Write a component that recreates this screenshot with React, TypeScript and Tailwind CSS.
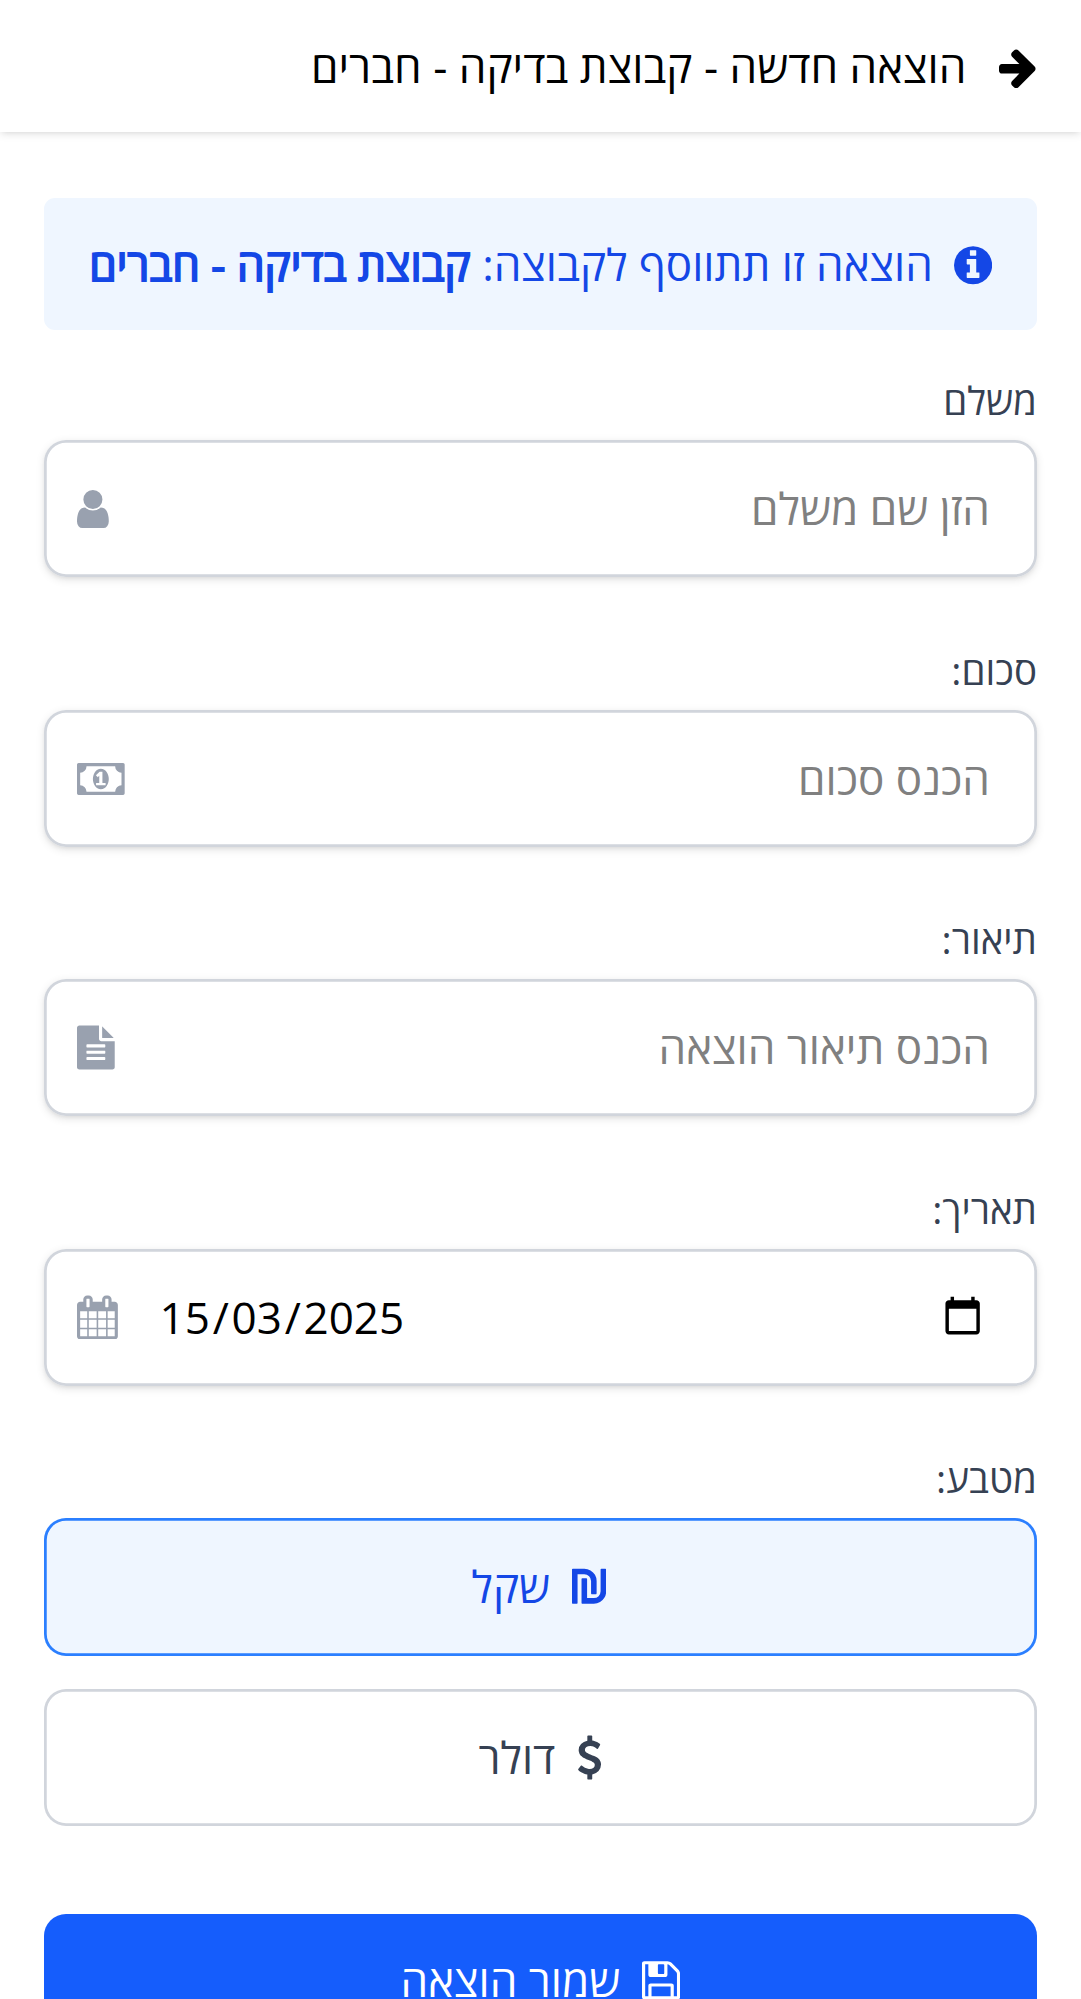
import type { ReactNode } from "react";

const ARROW =
  "M1600 960q0 54-37 91l-651 651q-39 37-91 37-51 0-90-37l-75-75q-38-38-38-91t38-91l293-293h-704q-52 0-84.5-37.5t-32.5-90.5v-128q0-53 32.5-90.5t84.5-37.5h704l-293-294q-38-36-38-90t38-90l75-75q38-38 90-38 53 0 91 38l651 651q37 35 37 90z";
const INFO =
  "M1152 1376v-160q0-14-9-23t-23-9h-96v-512q0-14-9-23t-23-9h-320q-14 0-23 9t-9 23v160q0 14 9 23t23 9h96v320h-96q-14 0-23 9t-9 23v160q0 14 9 23t23 9h448q14 0 23-9t9-23zm-128-896v-160q0-14-9-23t-23-9h-192q-14 0-23 9t-9 23v160q0 14 9 23t23 9h192q14 0 23-9t9-23zm640 416q0 209-103 385.5t-279.5 279.5-385.5 103-385.5-103-279.5-279.5-103-385.5 103-385.5 279.5-279.5 385.5-103 385.5 103 279.5 279.5 103 385.5z";
const USER =
  "M1536 1399q0 109-62.5 187t-150.5 78h-854q-88 0-150.5-78t-62.5-187q0-85 8.5-160.5t31.5-152 58.5-131 94-89 134.5-34.5q131 128 313 128t313-128q76 0 134.5 34.5t94 89 58.5 131 31.5 152 8.5 160.5zm-256-887q0 159-112.5 271.5t-271.5 112.5-271.5-112.5-112.5-271.5 112.5-271.5 271.5-112.5 271.5 112.5 112.5 271.5z";
const MONEY =
  "M768 1152h384v-96h-128v-448h-114l-148 137 77 80q42-37 55-57h2v288h-128v96zm512-256q0 70-21 142t-59.5 134-101.5 101-138 39-138-39-101.5-101-59.5-134-21-142 21-142 59.5-134 101.5-101 138-39 138 39 101.5 101 59.5 134 21 142zm512 256v-512q-106 0-181-75t-75-181h-1152q0 106-75 181t-181 75v512q106 0 181 75t75 181h1152q0-106 75-181t181-75zm128-832v1152q0 26-19 45t-45 19h-1792q-26 0-45-19t-19-45v-1152q0-26 19-45t45-19h1792q26 0 45 19t19 45z";
const FILE_TEXT =
  "M1596 476q14 14 28 36h-472v-472q22 14 36 28zm-476 164h544v1056q0 40-28 68t-68 28h-1344q-40 0-68-28t-28-68v-1600q0-40 28-68t68-28h800v544q0 40 28 68t68 28zm160 736v-64q0-14-9-23t-23-9h-704q-14 0-23 9t-9 23v64q0 14 9 23t23 9h704q14 0 23-9t9-23zm0-256v-64q0-14-9-23t-23-9h-704q-14 0-23 9t-9 23v64q0 14 9 23t23 9h704q14 0 23-9t9-23zm0-256v-64q0-14-9-23t-23-9h-704q-14 0-23 9t-9 23v64q0 14 9 23t23 9h704q14 0 23-9t9-23z";
const CALENDAR =
  "M192 1664h288v-288h-288v288zm352 0h320v-288h-320v288zm-352-352h288v-320h-288v320zm352 0h320v-320h-320v320zm-352-384h288v-288h-288v288zm736 736h320v-288h-320v288zm-384-736h320v-288h-320v288zm768 736h288v-288h-288v288zm-384-352h320v-320h-320v320zm-352-864v-288q0-13-9.5-22.5t-22.5-9.5h-64q-13 0-22.5 9.5t-9.5 22.5v288q0 13 9.5 22.5t22.5 9.5h64q13 0 22.5-9.5t9.5-22.5zm736 864h288v-320h-288v320zm-384-384h320v-288h-320v288zm384 0h288v-288h-288v288zm32-480v-288q0-13-9.5-22.5t-22.5-9.5h-64q-13 0-22.5 9.5t-9.5 22.5v288q0 13 9.5 22.5t22.5 9.5h64q13 0 22.5-9.5t9.5-22.5zm384-64v1280q0 52-38 90t-90 38h-1408q-52 0-90-38t-38-90v-1280q0-52 38-90t90-38h128v-96q0-66 47-113t113-47h64q66 0 113 47t47 113v96h384v-96q0-66 47-113t113-47h64q66 0 113 47t47 113v96h128q52 0 90 38t38 90z";
const SHEKEL =
  "M992 496v496q0 14-9 23t-23 9h-160q-14 0-23-9t-9-23v-496q0-112-80-192t-192-80h-272v1152q0 14-9 23t-23 9h-160q-14 0-23-9t-9-23v-1344q0-14 9-23t23-9h464q135 0 249 66.5t180.5 180.5 66.5 249zm384-464v880q0 135-66.5 249t-180.5 180.5-249 66.5h-464q-14 0-23-9t-9-23v-960q0-14 9-23t23-9h160q14 0 23 9t9 23v768h272q112 0 192-80t80-192v-880q0-14 9-23t23-9h160q14 0 23 9t9 23z";
const DOLLAR =
  "M1362 1185q0 153-99.5 263.5t-258.5 136.5v175q0 14-9 23t-23 9h-135q-13 0-22.5-9.5t-9.5-22.5v-175q-66-9-127.5-31t-101.5-44.5-74-48-46.5-37.5-17.5-18q-17-21-2-41l103-135q7-10 23-12 15-2 24 9l2 2q113 99 243 125 37 8 74 8 81 0 142.5-43t61.5-122q0-28-15-53t-33.5-42-58.5-37.5-66-32-80-32.5q-39-16-61.5-25t-61.5-26.5-62.5-31-56.5-35.5-53.5-42.5-43.5-49-35.5-58-21-66.5-8.5-78q0-138 98-242t255-134v-180q0-13 9.5-22.5t22.5-9.5h135q14 0 23 9t9 23v176q57 6 110.5 23t87 33.5 63.5 37.5 39 29 15 14q17 18 5 38l-81 146q-8 15-23 16-14 3-27-7-3-3-14.5-12t-39-26.5-58.5-32-74.5-26-85.5-11.5q-95 0-155 43t-60 111q0 26 8.5 48t29.5 41.5 39.5 33 56 31 60.5 27 70 27.5q53 20 81 31.5t76 35 75.5 42.5 62 50 53 63.5 31.5 76.5 13 94z";
const SAVE =
  "M512 1536h768v-384h-768v384zm896 0h128v-896q0-14-10-38.5t-20-34.5l-281-281q-10-10-34-20t-39-10v416q0 40-28 68t-68 28h-576q-40 0-68-28t-28-68v-416h-128v1280h128v-416q0-40 28-68t68-28h832q40 0 68 28t28 68v416zm-384-928v-320q0-13-9.5-22.5t-22.5-9.5h-192q-13 0-22.5 9.5t-9.5 22.5v320q0 13 9.5 22.5t22.5 9.5h192q13 0 22.5-9.5t9.5-22.5zm640 32v928q0 40-28 68t-68 28h-1344q-40 0-68-28t-28-68v-1344q0-40 28-68t68-28h928q40 0 88 20t76 48l280 280q28 28 48 76t20 88z";

function Icon({ d, box }: { d: string; box: string }) {
  return (
    <svg viewBox={box} className="h-[44.5px] w-auto shrink-0" fill="currentColor" aria-hidden="true">
      <path d={d} />
    </svg>
  );
}

function Label({ children }: { children: ReactNode }) {
  return <div className="mb-[12px] h-[54px] text-[38.5px] leading-[53px] text-gray-700">{children}</div>;
}

function Field({ label, icon, children }: { label: string; icon: ReactNode; children: ReactNode }) {
  return (
    <div>
      <Label>{label}</Label>
      <div className="flex h-[137px] items-center justify-between rounded-[22px] pr-[47px] pl-[33px] shadow-[inset_0_0_0_2.75px_#d1d5dc,0_2.75px_8.25px_rgb(0_0_0/0.1),0_2.75px_5.5px_-2.75px_rgb(0_0_0/0.1)]">
        {children}
        <span className="text-gray-400">{icon}</span>
      </div>
    </div>
  );
}

function Placeholder({ children }: { children: ReactNode }) {
  return <span className="mb-[1px] leading-[66px] text-[#808080]">{children}</span>;
}

export default function App() {
  return (
    <div
      dir="rtl"
      className="h-[1999px] w-full overflow-hidden bg-white font-['Open_Sans','Noto_Sans',sans-serif] text-[44px] leading-[66px] text-black"
    >
      <header className="flex h-[132px] items-center gap-[32.5px] px-[44px] shadow-[0_2.75px_8.25px_rgb(0_0_0/0.1),0_2.75px_5.5px_-2.75px_rgb(0_0_0/0.1)]">
        <Icon d={ARROW} box="128 -40 1536 1792" />
        <h1 className="whitespace-nowrap">הוצאה חדשה - קבוצת בדיקה - חברים</h1>
      </header>

      <main className="px-[44px] pt-[66px]">
        <div className="mb-[44px] flex h-[132px] items-center gap-[21px] rounded-[11px] bg-blue-50 px-[45px] text-blue-700">
          <Icon d={INFO} box="128 -40 1536 1792" />
          <span className="whitespace-nowrap">
            הוצאה זו תתווסף לקבוצה:{" "}
            <strong className="font-normal [-webkit-text-stroke:1.8px_currentColor]">קבוצת בדיקה - חברים</strong>
          </span>
        </div>

        <div className="flex flex-col gap-[66.5px]">
          <Field label="משלם" icon={<Icon d={USER} box="256 -30 1280 1792" />}>
            <Placeholder>הזן שם משלם</Placeholder>
          </Field>
          <Field label="סכום:" icon={<Icon d={MONEY} box="0 -30 1920 1792" />}>
            <Placeholder>הכנס סכום</Placeholder>
          </Field>
          <Field label="תיאור:" icon={<Icon d={FILE_TEXT} box="128 -20 1536 1812" />}>
            <Placeholder>הכנס תיאור הוצאה</Placeholder>
          </Field>
          <Field label="תאריך:" icon={<Icon d={CALENDAR} box="64 -20 1664 1812" />}>
            <div className="flex flex-1 items-center justify-between pr-[6.5px] pl-[39px]">
              <svg viewBox="0 0 24 24" className="mb-[3px] size-[41.25px]" fill="currentColor" aria-hidden="true">
                <path d="M20 3h-1V1h-2v2H7V1H5v2H4c-1.1 0-2 .9-2 2v16c0 1.1.9 2 2 2h16c1.1 0 2-.9 2-2V5c0-1.1-.9-2-2-2zm0 18H4V8h16v13z" />
              </svg>
              <span dir="ltr" className="whitespace-nowrap">
                <span className="px-[2.75px]">15</span>/<span className="px-[2.75px]">03</span>/
                <span className="pl-[2.75px]">2025</span>
              </span>
            </div>
          </Field>

          <div>
            <Label>מטבע:</Label>
            <div className="flex flex-col gap-[33px]">
              <button className="flex h-[137.5px] items-center justify-center gap-[22px] rounded-[22px] bg-blue-50 pr-[3px] text-blue-700 shadow-[inset_0_0_0_2.75px_#2b7fff]">
                <Icon d={SHEKEL} box="0 -150 1376 1792" />
                <span className="mb-[1px]">שקל</span>
              </button>
              <button className="flex h-[137.5px] items-center justify-center gap-[22px] rounded-[22px] text-gray-700 shadow-[inset_0_0_0_2.75px_#d1d5dc]">
                <Icon d={DOLLAR} box="384 -20 1024 1812" />
                <span>דולר</span>
              </button>
            </div>
          </div>
        </div>

        <button className="mt-[88px] flex h-[132px] w-full items-center justify-center gap-[22px] rounded-[22px] bg-blue-600 text-white">
          <Icon d={SAVE} box="128 0 1536 1792" />
          <span>שמור הוצאה</span>
        </button>
      </main>
    </div>
  );
}
